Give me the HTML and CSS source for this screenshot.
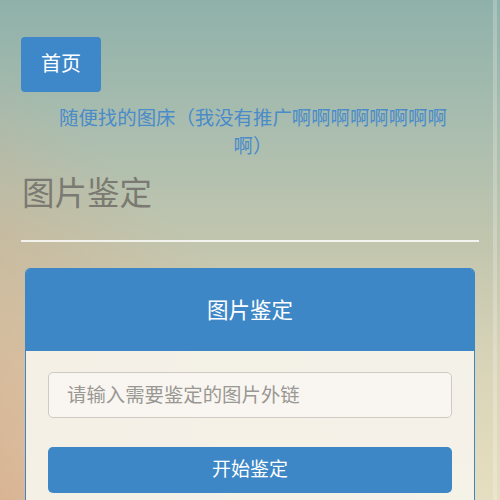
FILE: index.html
```
<!DOCTYPE html>
<html lang="zh">
<head>
<meta charset="utf-8">
<title>图片鉴定</title>
<link rel="stylesheet" href="styles.css">
</head>
<body>
<div class="page">
  <div class="nav"><a class="home-btn">首页</a></div>
  <p class="notice"><a class="notice-link">随便找的图床（我没有推广啊啊啊啊啊啊啊啊啊）</a></p>
  <h1 class="title">图片鉴定</h1>
  <hr class="rule">
  <div class="card">
    <div class="card-head">图片鉴定</div>
    <div class="card-body">
      <input class="url-input" type="text" placeholder="请输入需要鉴定的图片外链">
      <button class="submit-btn">开始鉴定</button>
    </div>
  </div>
</div>
</body>
</html>
```
FILE: styles.css
```
html, body {
  margin: 0;
  height: 100%;
}
body {
  font-family: "Noto Sans CJK SC", "Noto Sans", sans-serif;
  background:
    linear-gradient(to right, rgba(255, 255, 255, 0) 493px, rgba(255, 255, 255, 0.22) 493px, rgba(255, 255, 255, 0.22) 497px, rgba(255, 255, 255, 0) 497px),
    linear-gradient(to top right, rgba(212, 166, 132, 0.75) 0%, rgba(212, 166, 132, 0) 45%),
    linear-gradient(to bottom, #8fb1aa 0%, #a9bdaf 25%, #c3c6ae 50%, #dad5b9 75%, #e6dec0 100%);
  overflow: hidden;
}
.page {
  height: 100%;
  box-sizing: border-box;
  padding: 37px 21px 0;
}
.nav {
  display: flex;
}
.home-btn {
  display: flex;
  align-items: center;
  justify-content: center;
  width: 80px;
  height: 55px;
  box-sizing: border-box;
  padding-bottom: 4px;
  background: #3e87c8;
  color: #fff;
  border-radius: 4px;
  font-size: 20px;
}
.notice {
  margin: 11px auto 0;
  width: 396px;
  text-align: center;
  font-size: 19.4px;
  line-height: 28px;
  padding-left: 6px;
}
.notice-link {
  color: #4a8bc9;
}
.title {
  margin: 12px 0 0 1px;
  font-size: 32.5px;
  font-weight: 400;
  color: #7a7a72;
  line-height: 40px;
}
.rule {
  margin: 29px 0 0;
  border: 0;
  height: 2px;
  background: rgba(255, 255, 255, 0.8);
}
.card {
  margin: 26px 4px 0;
  border: 1px solid #3d86c6;
  border-radius: 5px;
  overflow: hidden;
  background: rgba(246, 242, 234, 0.95);
}
.card-head {
  height: 82px;
  box-sizing: border-box;
  padding-bottom: 4px;
  display: flex;
  align-items: center;
  justify-content: center;
  background: #3d87c7;
  color: #fff;
  font-size: 21.5px;
}
.card-body {
  padding: 21px 22px 30px;
  display: flex;
  flex-direction: column;
  gap: 29px;
}
.url-input {
  height: 46px;
  box-sizing: border-box;
  border: 1px solid #cfcac2;
  border-radius: 5px;
  background: #f9f6f2;
  padding: 0 18px 4px;
  font-family: inherit;
  font-size: 19.4px;
  color: #555;
}
.url-input::placeholder {
  color: #9a9893;
}
.submit-btn {
  height: 46px;
  box-sizing: border-box;
  padding: 0 0 5px;
  border: 0;
  border-radius: 5px;
  background: #3d87c7;
  color: #fff;
  font-family: inherit;
  font-size: 19px;
}
```
